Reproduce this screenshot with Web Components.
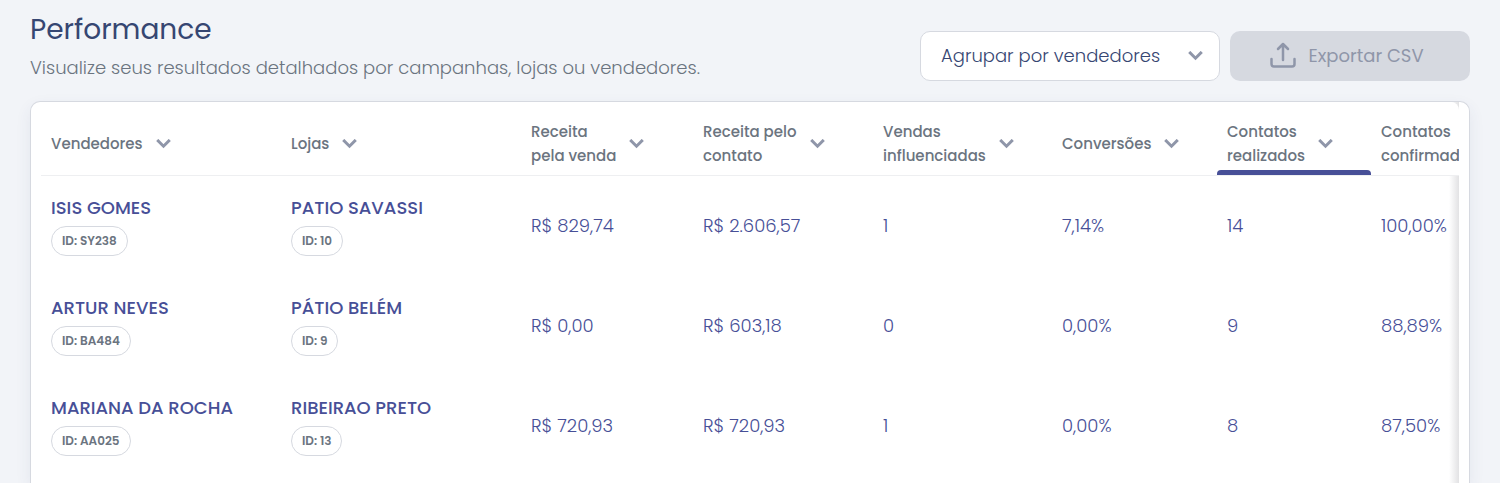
<!DOCTYPE html>
<html lang="pt-BR">
<head>
<meta charset="UTF-8">
<meta name="viewport" content="width=device-width, initial-scale=1.0">
<title>Performance</title>
<style>
    :root {
        --primary: #474f97;
        --title: #364672;
        --text: #6b7480;
        --icon: #8f96a9;
        --border: #d6d9e0;
        --bg: #f2f4f8;
    }
    * { box-sizing: border-box; }
    body {
        margin: 0;
        background: var(--bg);
        color: var(--text);
        font-family: Poppins, Inter, "Open Sans", sans-serif;
    }
    main {
        min-height: 100vh;
        padding: 10px 30px 0;
        display: flex;
        flex-direction: column;
    }
    performance-table { flex: 1; }
</style>
</head>
<body>
<main>
    <page-header>
        <span slot="title">Performance</span>
        <span slot="subtitle">Visualize seus resultados detalhados por campanhas, lojas ou vendedores.</span>
        <group-select slot="actions"></group-select>
        <export-button slot="actions">Exportar CSV</export-button>
    </page-header>
    <performance-table></performance-table>
</main>

<script>
// Icons
class ChevronIcon extends HTMLElement {
    connectedCallback() {
        this.attachShadow({ mode: 'open' }).innerHTML = `
        <style>
            :host { display: block; flex: none; width: 16px; height: 10px; color: var(--icon); }
            svg { display: block; }
        </style>
        <svg width="16" height="10" viewBox="0 0 16 10" fill="none" stroke="currentColor"
            stroke-width="3" stroke-linecap="square" aria-hidden="true">
            <path d="M2.3 2l5.2 5.2L12.7 2"/>
        </svg>
        `;
    }
}
customElements.define('chevron-icon', ChevronIcon);

// Page header: title and subtitle on the left, actions on the right
class PageHeader extends HTMLElement {
    connectedCallback() {
        this.attachShadow({ mode: 'open' }).innerHTML = `
        <style>
            :host { display: block; }
            header {
                display: flex;
                justify-content: space-between;
                align-items: flex-end;
                gap: 20px;
                padding-bottom: 20px;
            }
            h1 {
                margin: 0;
                color: var(--title);
                font-size: 28px;
                font-weight: 400;
                line-height: 40px;
            }
            p {
                margin: 4px 0 0;
                font-size: 18px;
                font-weight: 300;
                line-height: 27px;
            }
            .actions { display: flex; gap: 10px; }
        </style>
        <header>
            <div>
                <h1><slot name="title"></slot></h1>
                <p><slot name="subtitle"></slot></p>
            </div>
            <div class="actions"><slot name="actions"></slot></div>
        </header>
        `;
    }
}
customElements.define('page-header', PageHeader);

class GroupSelect extends HTMLElement {
    connectedCallback() {
        this.attachShadow({ mode: 'open' }).innerHTML = `
        <style>
            :host { display: block; width: 300px; }
            .field { display: grid; align-items: center; }
            select, chevron-icon { grid-area: 1 / 1; }
            select {
                appearance: none;
                width: 100%;
                height: 50px;
                padding: 0 50px 2px 20px;
                border: 1px solid var(--border);
                border-radius: 10px;
                background: #fff;
                color: var(--title);
                font: inherit;
                font-size: 18px;
                font-weight: 300;
                cursor: pointer;
            }
            chevron-icon {
                justify-self: end;
                margin-right: 16px;
                pointer-events: none;
            }
        </style>
        <div class="field">
            <select aria-label="Agrupar resultados">
                <option>Agrupar por vendedores</option>
            </select>
            <chevron-icon></chevron-icon>
        </div>
        `;
    }
}
customElements.define('group-select', GroupSelect);

class ExportButton extends HTMLElement {
    connectedCallback() {
        this.attachShadow({ mode: 'open' }).innerHTML = `
        <style>
            :host { display: block; width: 240px; }
            button {
                display: flex;
                align-items: center;
                justify-content: center;
                gap: 12px;
                width: 100%;
                height: 50px;
                padding: 0 6px 2px 0;
                border: 0;
                border-radius: 10px;
                background: var(--border);
                color: var(--icon);
                font: inherit;
                font-size: 18px;
                font-weight: 400;
            }
        </style>
        <button type="button" disabled>
            <svg width="26" height="26" viewBox="0 0 26 26" fill="none" stroke="currentColor"
                stroke-width="2.5" stroke-linecap="round" stroke-linejoin="round" aria-hidden="true">
                <path d="M13 18V2M8 7l5-5 5 5"/>
                <path d="M1.5 17v5a2.5 2.5 0 0 0 2.5 2.5h18a2.5 2.5 0 0 0 2.5-2.5v-5"/>
            </svg>
            <span><slot></slot></span>
        </button>
        `;
    }
}
customElements.define('export-button', ExportButton);

// Sortable column label
class SortLabel extends HTMLElement {
    connectedCallback() {
        this.attachShadow({ mode: 'open' }).innerHTML = `
        <style>
            :host { display: block; }
            button {
                display: flex;
                align-items: center;
                gap: 13px;
                padding: 0;
                border: 0;
                background: none;
                color: var(--text);
                font: inherit;
                font-size: 15px;
                font-weight: 500;
                line-height: 24px;
                text-align: left;
                cursor: pointer;
            }
            span { white-space: pre; }
        </style>
        <button type="button"><span><slot></slot></span><chevron-icon></chevron-icon></button>
        `;
    }
}
customElements.define('sort-label', SortLabel);

// Name with its ID badge
class EntityName extends HTMLElement {
    connectedCallback() {
        const code = this.getAttribute('code') || '';

        this.attachShadow({ mode: 'open' }).innerHTML = `
        <style>
            :host { display: block; }
            .name {
                color: var(--primary);
                font-size: 18px;
                font-weight: 500;
                line-height: 24px;
                white-space: nowrap;
            }
            .badge {
                display: inline-block;
                box-sizing: border-box;
                margin-top: 6px;
                height: 30px;
                padding: 0 10px;
                border: 1px solid var(--border);
                border-radius: 15px;
                color: var(--text);
                font-size: 12px;
                font-weight: 600;
                line-height: 28px;
                vertical-align: top;
            }
        </style>
        <div class="name"><slot></slot></div>
        <span class="badge">ID: ${code}</span>
        `;
    }
}
customElements.define('entity-name', EntityName);

// Results table
const columns = [
    { label: 'Vendedores', width: 240 },
    { label: 'Lojas', width: 240 },
    { label: 'Receita\npela venda', width: 172 },
    { label: 'Receita pelo\ncontato', width: 180 },
    { label: 'Vendas\ninfluenciadas', width: 179 },
    { label: 'Conversões', width: 165 },
    { label: 'Contatos\nrealizados', width: 154, active: true },
    { label: 'Contatos\nconfirmados', width: 170 }
];

const rows = [
    {
        seller: ['ISIS GOMES', 'SY238'],
        store: ['PATIO SAVASSI', '10'],
        values: ['R$ 829,74', 'R$ 2.606,57', '1', '7,14%', '14', '100,00%']
    },
    {
        seller: ['ARTUR NEVES', 'BA484'],
        store: ['PÁTIO BELÉM', '9'],
        values: ['R$ 0,00', 'R$ 603,18', '0', '0,00%', '9', '88,89%']
    },
    {
        seller: ['MARIANA DA ROCHA', 'AA025'],
        store: ['RIBEIRAO PRETO', '13'],
        values: ['R$ 720,93', 'R$ 720,93', '1', '0,00%', '8', '87,50%']
    }
];

class PerformanceTable extends HTMLElement {
    connectedCallback() {
        this.attachShadow({ mode: 'open' });
        this.render();
    }

    renderEntity([name, code]) {
        return `<td><entity-name code="${code}">${name}</entity-name></td>`;
    }

    render() {
        const cols = columns.map(c => `<col style="width: ${c.width}px">`).join('');
        const head = columns.map(c => `
            <th scope="col"${c.active ? ' class="active" aria-sort="descending"' : ''}>
                <sort-label>${c.label}</sort-label>
            </th>`).join('');
        const body = rows.map(r => `
            <tr>
                ${this.renderEntity(r.seller)}
                ${this.renderEntity(r.store)}
                ${r.values.map(v => `<td>${v}</td>`).join('')}
            </tr>`).join('');

        this.shadowRoot.innerHTML = `
        <style>
            :host {
                display: flex;
                padding: 0 10px;
                border: 1px solid var(--border);
                border-bottom: 0;
                border-radius: 10px 10px 0 0;
                background: #fff;
                box-shadow: 0 6px 16px rgba(54, 70, 114, 0.08);
            }
            /* the right edge fades to hint at the columns still to scroll */
            .scroller {
                flex: 1;
                min-width: 0;
                overflow-x: auto;
                scrollbar-width: none;
                position: relative;
                background: linear-gradient(to left, #e2e2e4, #fff) right / 10px 100% no-repeat;
            }
            .scroller::before {
                content: '';
                position: absolute;
                inset: 0 0 auto;
                height: 74px;
                border-radius: 0 8px 0 0;
                background: #fff;
            }
            table {
                position: relative;
                table-layout: fixed;
                width: 1500px;
                border-collapse: separate;
                border-spacing: 0;
            }
            th {
                box-sizing: border-box;
                height: 74px;
                padding: 10px 0 0 10px;
                border-bottom: 1px solid #eeeff1;
                text-align: left;
            }
            th.active { position: relative; }
            th.active::after {
                content: '';
                position: absolute;
                inset: auto 0 0;
                height: 5px;
                border-radius: 4px 4px 0 0;
                background: var(--primary);
            }
            td {
                box-sizing: border-box;
                height: 100px;
                padding: 0 0 0 10px;
                color: var(--primary);
                font-size: 18px;
                font-weight: 300;
                line-height: 24px;
                white-space: nowrap;
            }
        </style>
        <div class="scroller">
            <table>
                <colgroup>${cols}</colgroup>
                <thead><tr>${head}</tr></thead>
                <tbody>${body}</tbody>
            </table>
        </div>
        `;
    }
}
customElements.define('performance-table', PerformanceTable);
</script>
</body>
</html>
